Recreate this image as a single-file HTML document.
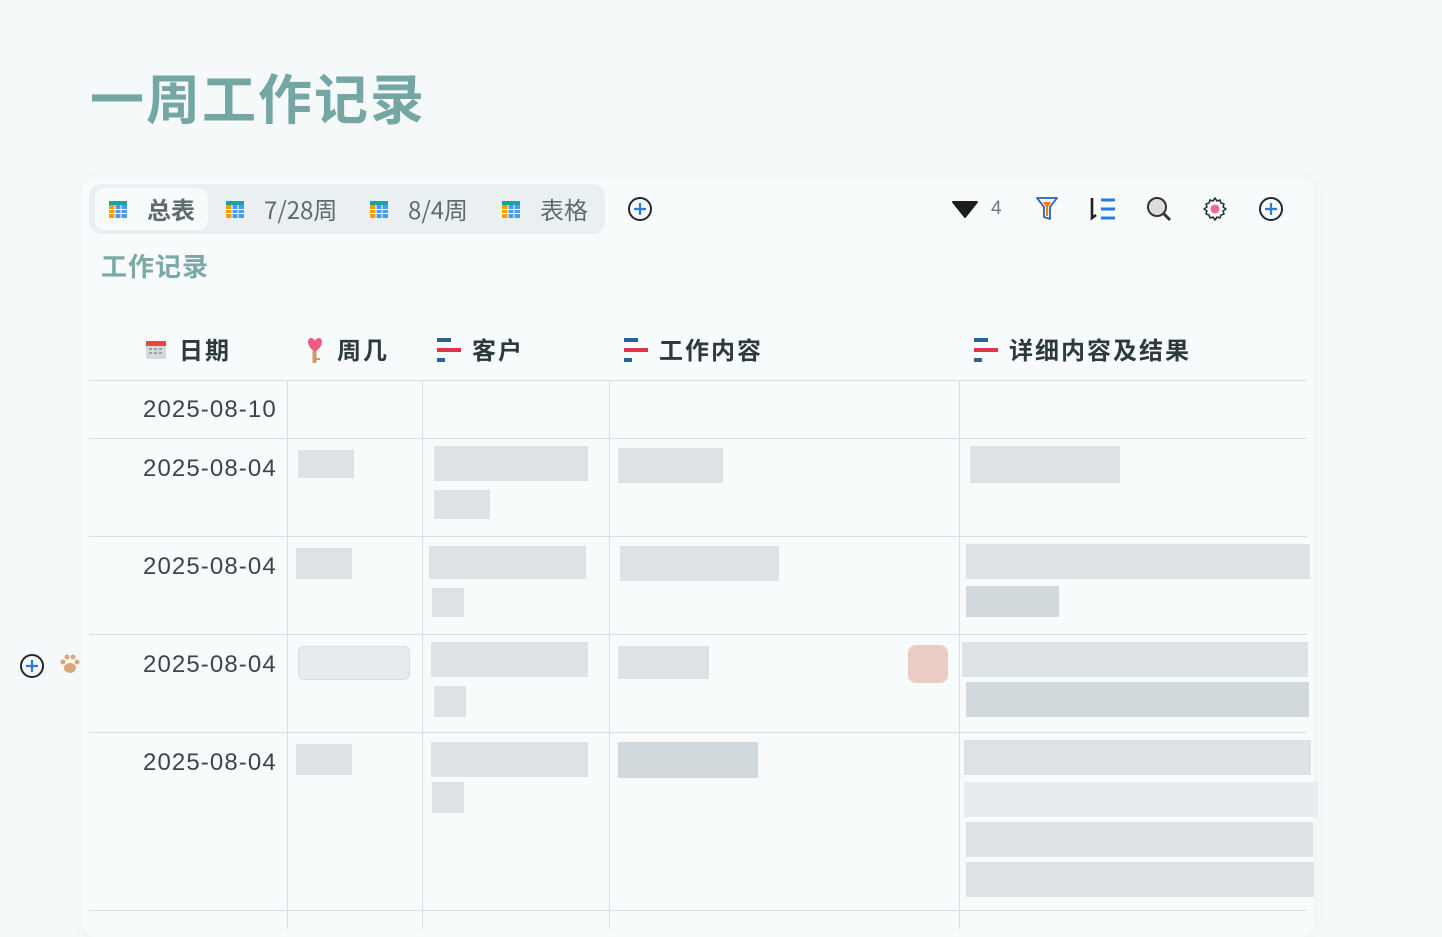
<!DOCTYPE html>
<html><head><meta charset="utf-8"><style>
*{margin:0;padding:0;box-sizing:border-box}
body{width:1442px;height:929px;overflow:hidden;background:#f5f9fa;font-family:"Liberation Sans","Noto Sans CJK SC",sans-serif;position:relative;color:#333}
.a{position:absolute}
h1{position:absolute;left:90px;top:56px;font-size:54px;font-weight:700;color:#74a6a3;letter-spacing:2px;font-family:"Noto Sans CJK SC",sans-serif}
.card{left:82px;top:177px;width:1232px;height:760px;background:#f8fbfc;border-radius:14px;box-shadow:0 0 12px rgba(0,0,0,.04)}
.tabs{left:89px;top:184px;width:516px;height:50px;background:#eaf0f2;border-radius:12px}
.sel{left:95px;top:188px;width:113px;height:42px;background:#f8fbfc;border-radius:10px}
.t{font-size:24px;color:#5f6b6e;top:193px;font-family:"Noto Sans CJK SC",sans-serif;line-height:32px}
.tb{width:18px;height:17px;top:201px}
.hd{font-size:24px;font-weight:700;color:#2c3a3d;top:333px;line-height:32px;font-family:"Noto Sans CJK SC",sans-serif;letter-spacing:2px}
.hl{height:1px;background:#d5dee1;left:89px;width:1218px}
.vl{width:1px;background:#d5dee1;top:380px;height:549px}
.d{font-size:24px;color:#3c4649;left:143px;line-height:30px;letter-spacing:1.1px}
.b{background:#dde3e5}
.b2{background:#d2d9dc}
.b3{background:#e7ecee}
</style></head><body>
<h1>一周工作记录</h1>
<div class="a card"></div>
<div class="a tabs"></div>
<div class="a sel"></div>
<svg class="a tb" style="left:109px" viewBox="0 0 18 17"><rect width="18" height="4" fill="#1ba3a3"/><rect y="4" width="18" height="13" fill="#4b9be8"/><rect y="4" width="6" height="13" fill="#f0a000"/><path d="M0 8.5h18M0 12.5h18M6 4v13M12 4v13" stroke="#fff" stroke-width="1"/></svg>
<div class="a t" style="left:147px;font-weight:700">总表</div>
<svg class="a tb" style="left:226px" viewBox="0 0 18 17"><rect width="18" height="4" fill="#1ba3a3"/><rect y="4" width="18" height="13" fill="#4b9be8"/><rect y="4" width="6" height="13" fill="#f0a000"/><path d="M0 8.5h18M0 12.5h18M6 4v13M12 4v13" stroke="#fff" stroke-width="1"/></svg>
<div class="a t" style="left:264px">7/28周</div>
<svg class="a tb" style="left:370px" viewBox="0 0 18 17"><rect width="18" height="4" fill="#1ba3a3"/><rect y="4" width="18" height="13" fill="#4b9be8"/><rect y="4" width="6" height="13" fill="#f0a000"/><path d="M0 8.5h18M0 12.5h18M6 4v13M12 4v13" stroke="#fff" stroke-width="1"/></svg>
<div class="a t" style="left:408px">8/4周</div>
<svg class="a tb" style="left:502px" viewBox="0 0 18 17"><rect width="18" height="4" fill="#1ba3a3"/><rect y="4" width="18" height="13" fill="#4b9be8"/><rect y="4" width="6" height="13" fill="#f0a000"/><path d="M0 8.5h18M0 12.5h18M6 4v13M12 4v13" stroke="#fff" stroke-width="1"/></svg>
<div class="a t" style="left:540px">表格</div>
<svg class="a" style="left:627px;top:196px" width="26" height="26" viewBox="0 0 26 26"><circle cx="13" cy="13" r="11" fill="none" stroke="#1d2a33" stroke-width="2"/><path d="M13 7v12M7 13h12" stroke="#2a7ae2" stroke-width="2.2"/></svg>
<svg class="a" style="left:952px;top:200px" width="26" height="18" viewBox="0 0 26 18"><path d="M1 2h24L13 17z" fill="#1d1d1d" stroke="#1d1d1d" stroke-linejoin="round" stroke-width="2"/></svg>
<div class="a" style="left:991px;top:198px;font-size:19px;color:#6b7779">4</div>
<svg class="a" style="left:1035px;top:196px" width="24" height="26" viewBox="0 0 24 26"><path d="M2 2h20l-7 9v12l-6-2V11z" fill="none" stroke="#2b61b8" stroke-width="1.8" stroke-linejoin="round"/><path d="M8 6h8l-3 5v9h-2v-9z" fill="#f07a1a"/></svg>
<svg class="a" style="left:1089px;top:196px" width="28" height="26" viewBox="0 0 28 26"><path d="M3 2v20l4-3" fill="none" stroke="#222" stroke-width="2.6"/><path d="M12 4h14M12 13h14M12 22h14" stroke="#2a7ae2" stroke-width="3"/></svg>
<svg class="a" style="left:1146px;top:196px" width="28" height="28" viewBox="0 0 28 28"><circle cx="11" cy="11" r="9" fill="#ddd" stroke="#333" stroke-width="2"/><path d="M18 18l6 6" stroke="#333" stroke-width="3"/></svg>
<svg class="a" style="left:1202px;top:196px" width="26" height="26" viewBox="0 0 26 26"><path d="M13 2l2 3 3-1 1 3 3 1-1 3 3 2-3 2 1 3-3 1-1 3-3-1-2 3-2-3-3 1-1-3-3-1 1-3-3-2 3-2-1-3 3-1 1-3 3 1z" fill="#fff" stroke="#333" stroke-width="1.6" stroke-linejoin="round"/><circle cx="13" cy="13" r="4.5" fill="#f06b8b"/></svg>
<svg class="a" style="left:1258px;top:196px" width="26" height="26" viewBox="0 0 26 26"><circle cx="13" cy="13" r="11" fill="none" stroke="#1d2a33" stroke-width="2"/><path d="M13 7v12M7 13h12" stroke="#2a7ae2" stroke-width="2.2"/></svg>
<div class="a" style="left:101px;top:248px;font-size:26px;font-weight:700;color:#7aa9a6;font-family:'Noto Sans CJK SC',sans-serif;line-height:36px;letter-spacing:1px">工作记录</div>

<svg class="a" style="left:145px;top:338px" width="22" height="22" viewBox="0 0 22 22"><rect x="1" y="3" width="20" height="18" rx="2" fill="#d3d9dd"/><rect x="1" y="3" width="20" height="5" fill="#e94545"/><g fill="#9aa3a8"><rect x="4" y="10" width="3" height="2"/><rect x="9" y="10" width="3" height="2"/><rect x="14" y="10" width="3" height="2"/><rect x="4" y="14" width="3" height="2"/><rect x="9" y="14" width="3" height="2"/><rect x="14" y="14" width="3" height="2"/></g></svg>
<div class="a hd" style="left:179px">日期</div>
<svg class="a" style="left:304px;top:336px" width="22" height="28" viewBox="0 0 22 28"><path d="M11 16C2 10 3 2 7 2c2 0 4 2 4 3 0-1 2-3 4-3 4 0 5 8-4 14z" fill="#f05a7e"/><rect x="8.5" y="15" width="4" height="12" fill="#c99a6a"/><rect x="12" y="22" width="4" height="2" fill="#c99a6a"/></svg>
<div class="a hd" style="left:337px">周几</div>
<svg class="a" style="left:437px;top:338px" width="24" height="24" viewBox="0 0 24 24"><rect width="14" height="4" fill="#2a6496"/><rect y="10" width="24" height="4" fill="#e0344b"/><rect y="20" width="8" height="4" fill="#2a6496"/></svg>
<div class="a hd" style="left:472px">客户</div>
<svg class="a" style="left:624px;top:338px" width="24" height="24" viewBox="0 0 24 24"><rect width="14" height="4" fill="#2a6496"/><rect y="10" width="24" height="4" fill="#e0344b"/><rect y="20" width="8" height="4" fill="#2a6496"/></svg>
<div class="a hd" style="left:659px">工作内容</div>
<svg class="a" style="left:974px;top:338px" width="24" height="24" viewBox="0 0 24 24"><rect width="14" height="4" fill="#2a6496"/><rect y="10" width="24" height="4" fill="#e0344b"/><rect y="20" width="8" height="4" fill="#2a6496"/></svg>
<div class="a hd" style="left:1009px">详细内容及结果</div>

<div class="a hl" style="top:380px"></div>
<div class="a hl" style="top:438px"></div>
<div class="a hl" style="top:536px"></div>
<div class="a hl" style="top:634px"></div>
<div class="a hl" style="top:732px"></div>
<div class="a hl" style="top:910px"></div>
<div class="a vl" style="left:287px"></div>
<div class="a vl" style="left:422px"></div>
<div class="a vl" style="left:609px"></div>
<div class="a vl" style="left:959px"></div>

<div class="a d" style="top:395px">2025-08-10</div>
<div class="a d" style="top:454px">2025-08-04</div>
<div class="a d" style="top:552px">2025-08-04</div>
<div class="a d" style="top:650px">2025-08-04</div>
<div class="a d" style="top:748px">2025-08-04</div>

<svg class="a" style="left:19px;top:653px" width="26" height="26" viewBox="0 0 26 26"><circle cx="13" cy="13" r="11" fill="none" stroke="#1d2a33" stroke-width="2"/><path d="M13 7v12M7 13h12" stroke="#2a7ae2" stroke-width="2.2"/></svg>
<svg class="a" style="left:58px;top:652px" width="24" height="24" viewBox="0 0 24 24" fill="#d9a77a"><ellipse cx="12" cy="16" rx="6" ry="5"/><circle cx="5" cy="10" r="2.5"/><circle cx="9" cy="5" r="2.5"/><circle cx="15" cy="5" r="2.5"/><circle cx="19" cy="10" r="2.5"/></svg>

<div class="a b" style="left:298px;top:450px;width:56px;height:28px"></div>
<div class="a b" style="left:434px;top:446px;width:154px;height:35px"></div>
<div class="a b" style="left:434px;top:490px;width:56px;height:29px"></div>
<div class="a b" style="left:618px;top:448px;width:105px;height:35px"></div>
<div class="a b" style="left:970px;top:446px;width:150px;height:37px"></div>

<div class="a b" style="left:296px;top:548px;width:56px;height:31px"></div>
<div class="a b" style="left:429px;top:546px;width:157px;height:33px"></div>
<div class="a b" style="left:432px;top:588px;width:32px;height:29px"></div>
<div class="a b" style="left:620px;top:546px;width:159px;height:35px"></div>
<div class="a b" style="left:966px;top:544px;width:344px;height:35px"></div>
<div class="a b2" style="left:966px;top:586px;width:93px;height:31px"></div>

<div class="a b3" style="left:298px;top:646px;width:112px;height:34px;border:1px solid #d5dee1;border-radius:6px"></div>
<div class="a b" style="left:431px;top:642px;width:157px;height:35px"></div>
<div class="a b" style="left:434px;top:686px;width:32px;height:31px"></div>
<div class="a b" style="left:618px;top:646px;width:91px;height:33px"></div>
<div class="a" style="left:908px;top:645px;width:40px;height:38px;background:#ebcdc6;border-radius:8px"></div>
<div class="a b" style="left:962px;top:642px;width:346px;height:35px"></div>
<div class="a b2" style="left:966px;top:682px;width:343px;height:35px"></div>

<div class="a b" style="left:296px;top:744px;width:56px;height:31px"></div>
<div class="a b" style="left:431px;top:742px;width:157px;height:35px"></div>
<div class="a b" style="left:432px;top:782px;width:32px;height:31px"></div>
<div class="a b2" style="left:618px;top:742px;width:140px;height:36px"></div>
<div class="a b" style="left:964px;top:740px;width:347px;height:35px"></div>
<div class="a b3" style="left:964px;top:782px;width:354px;height:35px"></div>
<div class="a b" style="left:966px;top:822px;width:347px;height:35px"></div>
<div class="a b" style="left:966px;top:862px;width:348px;height:35px"></div>
</body></html>
